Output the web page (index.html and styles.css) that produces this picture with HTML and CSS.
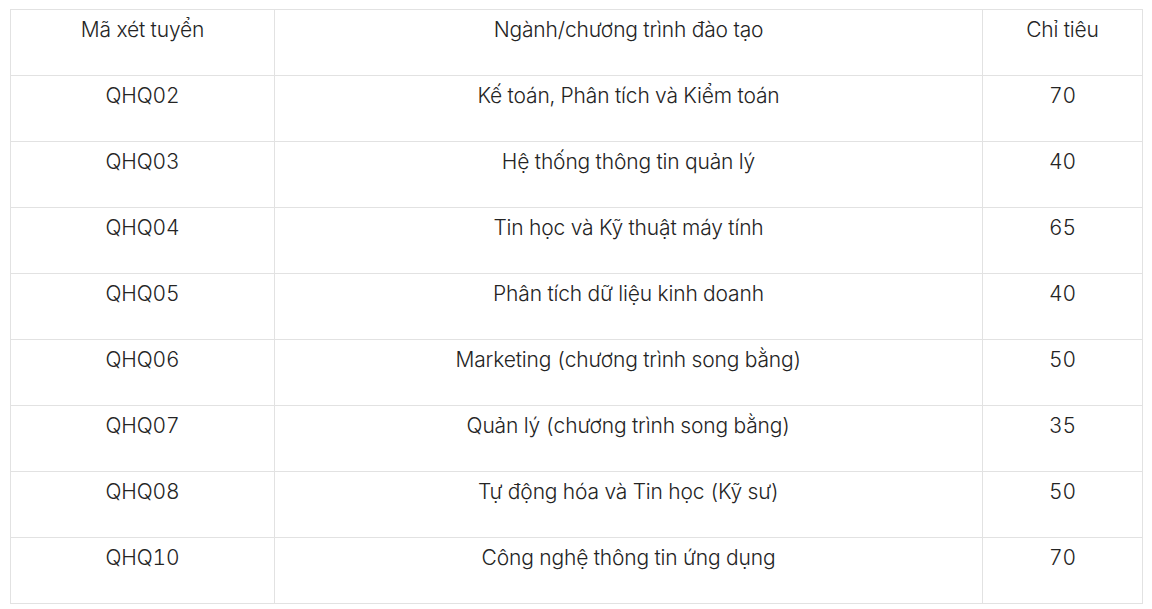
FILE: index.html
```html
<!DOCTYPE html>
<html lang="vi">
<head>
<meta charset="utf-8">
<link rel="stylesheet" href="styles.css">
</head>
<body>
<table class="quota">
  <colgroup>
    <col class="c1"><col class="c2"><col class="c3">
  </colgroup>
  <tr><td>Mã xét tuyển</td><td>Ngành/chương trình đào tạo</td><td>Chỉ tiêu</td></tr>
  <tr><td>QHQ02</td><td>Kế toán, Phân tích và Kiểm toán</td><td>70</td></tr>
  <tr><td>QHQ03</td><td>Hệ thống thông tin quản lý</td><td>40</td></tr>
  <tr><td>QHQ04</td><td>Tin học và Kỹ thuật máy tính</td><td>65</td></tr>
  <tr><td>QHQ05</td><td>Phân tích dữ liệu kinh doanh</td><td>40</td></tr>
  <tr><td>QHQ06</td><td>Marketing (chương trình song bằng)</td><td>50</td></tr>
  <tr><td>QHQ07</td><td>Quản lý (chương trình song bằng)</td><td>35</td></tr>
  <tr><td>QHQ08</td><td>Tự động hóa và Tin học (Kỹ sư)</td><td>50</td></tr>
  <tr><td>QHQ10</td><td>Công nghệ thông tin ứng dụng</td><td>70</td></tr>
</table>
</body>
</html>
```
FILE: styles.css
```css
html, body {
  margin: 0;
  background: #ffffff;
}
body {
  padding: 9px 0 0 10px;
  font-family: Inter, "Noto Sans", sans-serif;
  color: #242424;
}
.quota {
  border-collapse: collapse;
  table-layout: fixed;
  width: 1133px;
}
.c1 { width: 264px; }
.c2 { width: 708px; }
.c3 { width: 160px; }
.quota td {
  border: 1px solid #e2e2e2;
  box-sizing: border-box;
  height: 66px;
  padding: 5px 8px 0;
  vertical-align: top;
  text-align: center;
  font-size: 21px;
  font-weight: 350;
  line-height: 30px;
  letter-spacing: -0.15px;
  font-feature-settings: "tnum" 1;
}
```
